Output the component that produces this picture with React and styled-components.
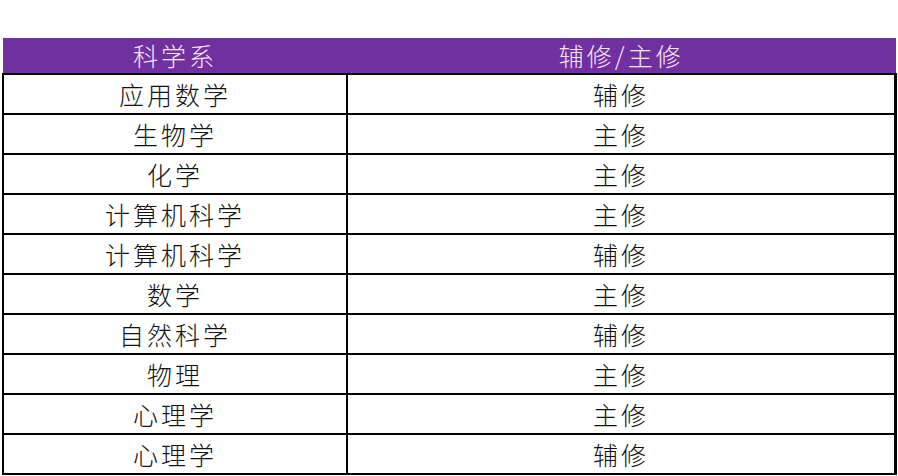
import React from "react";
import styled, { createGlobalStyle } from "styled-components";

const rows = [
    ["应用数学", "辅修"],
    ["生物学", "主修"],
    ["化学", "主修"],
    ["计算机科学", "主修"],
    ["计算机科学", "辅修"],
    ["数学", "主修"],
    ["自然科学", "辅修"],
    ["物理", "主修"],
    ["心理学", "主修"],
    ["心理学", "辅修"],
];

const GlobalStyle = createGlobalStyle`
    html, body {
        margin: 0;
        background: #fff;
    }
    body {
        font-family: "Noto Sans CJK SC", "Noto Sans", sans-serif;
    }
`;

const Page = styled.div`
    width: 898px;
    height: 476px;
    padding: 38px 1px 0 2px;
    box-sizing: border-box;
    overflow: hidden;
`;

const Table = styled.table`
    width: 895px;
    border-collapse: collapse;
    table-layout: fixed;
    col.major {
        width: 344px;
    }
`;

const HeadCell = styled.th`
    height: 35px;
    padding: 0;
    background: #7030a0;
    color: #fbe6f6;
    font-size: 25px;
    font-weight: 300;
    letter-spacing: 3px;
    text-align: center;
    line-height: 1;
    border: none;
    border-bottom: 2px solid #000;
`;

const Cell = styled.td`
    height: 38px;
    padding: 0;
    border: 2px solid #000;
    border-right-width: ${(p) => (p.$last ? "3px" : "2px")};
    color: #111;
    font-size: 25px;
    font-weight: 300;
    letter-spacing: 3px;
    text-align: center;
    line-height: 1;
`;

export default function App() {
    return (
        <Page>
            <GlobalStyle />
            <Table>
                <colgroup>
                    <col className="major" />
                    <col />
                </colgroup>
                <thead>
                    <tr>
                        <HeadCell>科学系</HeadCell>
                        <HeadCell>辅修/主修</HeadCell>
                    </tr>
                </thead>
                <tbody>
                    {rows.map(([name, kind], i) => (
                        <tr key={i}>
                            <Cell>{name}</Cell>
                            <Cell $last>{kind}</Cell>
                        </tr>
                    ))}
                </tbody>
            </Table>
        </Page>
    );
}
